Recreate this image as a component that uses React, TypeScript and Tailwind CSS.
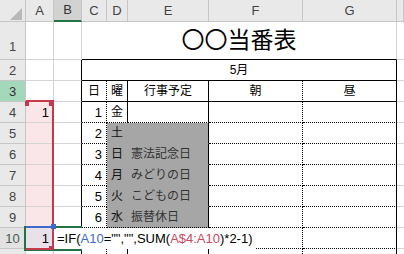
import React from 'react';

type Edge = 'g' | 's' | 'd' | 'h' | 'x' | 'n';

const RIGHT: Record<Edge, string> = {
  g: '[border-right:1px_solid_#d4d4d4]',
  s: '[border-right:1px_solid_#000]',
  d: '[border-right:1px_dotted_#000]',
  h: '[border-right:1px_solid_#c6c6c6]',
  x: '[border-right:1px_solid_#a6a6a6]',
  n: '',
};

const BOTTOM: Record<Edge, string> = {
  g: '[border-bottom:1px_solid_#d4d4d4]',
  s: '[border-bottom:1px_solid_#000]',
  d: '[border-bottom:1px_dotted_#000]',
  h: '[border-bottom:1px_solid_#c6c6c6]',
  x: '[border-bottom:1px_solid_#a6a6a6]',
  n: '',
};

const ALIGN = {
  l: 'justify-start pl-[3px]',
  c: 'justify-center',
  r: 'justify-end pr-[4px]',
};

type Cell = {
  r: Edge;
  b: Edge;
  text?: string;
  align?: keyof typeof ALIGN;
  cls?: string;
};

const DAYS = ['金', '土', '日', '月', '火', '水'];
const EVENTS = ['', '', '憲法記念日', 'みどりの日', 'こどもの日', '振替休日'];

const hdr = (n: number | '', cls = 'bg-[#e9e9e9] text-[#444]'): Cell => ({
  r: 'h', b: 'h', text: String(n), align: 'c', cls: `${cls} text-[13px]`,
});

function buildRows(): Cell[][] {
  const rows: Cell[][] = [];

  rows.push([
    hdr(1, 'bg-[#e9e9e9] text-[#444] items-end pb-[6px]'),
    { r: 'g', b: 'g' },
    { r: 'g', b: 'g' },
    { r: 'g', b: 's', text: '〇〇当番表', align: 'c', cls: 'col-span-5 text-[23px] items-end pb-[7px]' },
    { r: 'n', b: 'g' },
  ]);

  rows.push([
    hdr(2),
    { r: 'g', b: 'g' },
    { r: 's', b: 'g' },
    { r: 's', b: 's', text: '5月', align: 'c', cls: 'col-span-5 text-[12px]' },
    { r: 'n', b: 'g' },
  ]);

  rows.push([
    hdr(3, 'bg-[#a3d8ba] text-[#333]'),
    { r: 'g', b: 'g' },
    { r: 's', b: 'g' },
    { r: 'd', b: 's', text: '日', align: 'c' },
    { r: 's', b: 's', text: '曜', align: 'c' },
    { r: 's', b: 's', text: '行事予定', align: 'c' },
    { r: 'd', b: 's', text: '朝', align: 'c' },
    { r: 's', b: 's', text: '昼', align: 'c' },
    { r: 'n', b: 'g' },
  ]);

  for (let i = 0; i < 6; i++) {
    const gray = i >= 1;
    const inner = gray && i < 5;
    rows.push([
      hdr(i + 4),
      { r: 'g', b: 'g', text: i === 0 ? '1' : '', align: 'r', cls: 'bg-[#fae6e8] text-[13px]' },
      { r: 's', b: 'g' },
      { r: 'd', b: 'd', text: String(i + 1), align: 'r', cls: 'text-[13px]' },
      {
        r: gray ? 'x' : 's',
        b: inner ? 'x' : 'd',
        text: DAYS[i],
        align: 'c',
        cls: gray ? 'bg-[#a6a6a6] text-[#111]' : '',
      },
      {
        r: 's',
        b: inner ? 'x' : 'd',
        text: EVENTS[i],
        align: 'l',
        cls: gray ? 'bg-[#a6a6a6] text-[#333]' : '',
      },
      { r: 'd', b: 'd' },
      { r: 's', b: 'd' },
      { r: 'n', b: 'g' },
    ]);
  }

  rows.push([
    hdr(10, 'bg-[#e2e2e2] text-[#4a5a50]'),
    { r: 'g', b: 'g', text: '1', align: 'r', cls: 'bg-[#e9e1ea] text-[13px]' },
    { r: 's', b: 'g' },
    { r: 'd', b: 'd' },
    { r: 's', b: 'd' },
    { r: 's', b: 'd' },
    { r: 'd', b: 'd' },
    { r: 's', b: 'd' },
    { r: 'n', b: 'g' },
  ]);

  // row 11 only peeks in at the bottom edge
  rows.push([
    hdr(''),
    { r: 'g', b: 'g' },
    { r: 's', b: 'g' },
    { r: 'd', b: 'd' },
    { r: 's', b: 'd' },
    { r: 's', b: 'd' },
    { r: 'd', b: 'd' },
    { r: 's', b: 'd' },
    { r: 'n', b: 'g' },
  ]);

  return rows;
}

const COL_LETTERS = ['A', 'B', 'C', 'D', 'E', 'F', 'G', ''];

export default function App() {
  const rows = buildRows();

  return (
    <div className="relative w-[404px] h-[254px] overflow-hidden bg-white text-black font-['Liberation_Sans','Noto_Sans_CJK_JP',sans-serif]">
      <div className="grid grid-cols-[26px_28px_28px_25px_21px_81px_94px_94px_1fr] grid-rows-[22px_38px_21px_21px_21px_21px_21px_21px_21px_21px_21px_21px]">
        {/* column headings */}
        <div className="relative bg-[#e9e9e9] [border-right:1px_solid_#c6c6c6] [border-bottom:1px_solid_#c6c6c6]">
          <svg className="absolute left-0 top-0" width="26" height="22" viewBox="0 0 26 22">
            <polygon points="22,8 22,20 10,20" fill="#b8b8b8" />
          </svg>
        </div>
        {COL_LETTERS.map((l, i) => (
          <div
            key={i}
            className={
              l === 'B'
                ? 'flex items-center justify-center bg-[#d2d2d2] text-[13px] text-[#333] [border-right:1px_solid_#c6c6c6] [border-bottom:2px_solid_#217346]'
                : 'flex items-center justify-center bg-[#e9e9e9] text-[13px] text-[#444] [border-right:1px_solid_#c6c6c6] [border-bottom:1px_solid_#c6c6c6]'
            }
          >
            {l}
          </div>
        ))}

        {/* sheet rows */}
        {rows.map((row, ri) =>
          row.map((c, ci) => (
            <div
              key={`${ri}-${ci}`}
              className={`flex items-center whitespace-nowrap overflow-hidden text-[12px] leading-none ${RIGHT[c.r]} ${BOTTOM[c.b]} ${ALIGN[c.align ?? 'l']} ${c.cls ?? ''}`}
            >
              {c.text}
            </div>
          ))
        )}
      </div>

      {/* reference highlight A$4:A10 (red) */}
      <div className="absolute left-[26px] top-[100px] w-[28px] h-[150px] [border-top:2px_solid_#c5394b] [border-right:2px_solid_#c5394b] [border-bottom:2px_solid_#c5394b]">
        <div className="absolute -left-[1px] -top-[1px] w-[4px] h-[5px] bg-[#c5394b]" />
        <div className="absolute -right-[2px] -top-[1px] w-[5px] h-[5px] bg-[#c5394b]" />
        <div className="absolute -right-[2px] -bottom-[2px] w-[5px] h-[4px] bg-[#c5394b]" />
      </div>

      {/* formula being typed in B10 */}
      <div className="absolute left-[54px] top-[228px] w-[202px] h-[21px] bg-white flex items-center pl-[3px] text-[13px] whitespace-nowrap">
        <span>=IF(</span>
        <span className="text-[#4169c8]">A10</span>
        <span>="","",SUM(</span>
        <span className="text-[#c84a64]">A$4:A10</span>
        <span>)*2-1)</span>
      </div>

      {/* active cell frame A10:B10 */}
      <div className="absolute left-[24px] top-[226px] w-[58px] h-[25px] [border-left:2px_solid_#217346] [border-top:2px_solid_#217346] [border-bottom:2px_solid_#217346]" />
      {/* A10 reference (blue) drawn over the frame */}
      <div className="absolute left-[26px] top-[226px] w-[28px] h-[2px] bg-[#4169c8]">
        <div className="absolute -right-[2px] -top-[2px] w-[5px] h-[5px] bg-[#4169c8]" />
      </div>
      <div className="absolute left-[26px] top-[248px] w-[28px] h-[2px] bg-[#c5394b]" />
    </div>
  );
}
